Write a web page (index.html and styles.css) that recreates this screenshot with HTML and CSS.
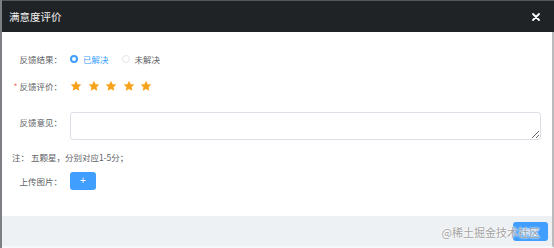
FILE: index.html
```html
<!DOCTYPE html>
<html lang="zh-CN">
<head>
  <meta charset="UTF-8">
  <meta name="viewport" content="width=device-width, initial-scale=1.0">
  <title>满意度评价</title>
  <link rel="stylesheet" href="styles.css">
</head>
<body>

<div class="dialog">
  <!-- Header -->
  <div class="dialog-header">
    <span class="dialog-title">满意度评价</span>
    <svg class="close-icon" width="8" height="8" viewBox="0 0 8 8">
      <path d="M1 1 L7 7 M7 1 L1 7" stroke="#fff" stroke-width="1.8" stroke-linecap="round"/>
    </svg>
  </div>

  <!-- Body -->
  <div class="dialog-body">
    <div class="form-row row-result">
      <label class="form-label">反馈结果：</label>
      <div class="radio-group">
        <span class="radio checked"><span class="radio-dot"></span>已解决</span>
        <span class="radio"><span class="radio-dot"></span>未解决</span>
      </div>
    </div>

    <div class="form-row row-rate">
      <label class="form-label"><span class="required">*</span> 反馈评价：</label>
      <div class="stars">
        <svg class="star" viewBox="0 0 24 24"><path d="M12 1.5l3.2 6.9 7.5.8-5.6 5.1 1.6 7.4L12 17.9l-6.7 3.8 1.6-7.4L1.3 9.2l7.5-.8z"/></svg>
        <svg class="star" viewBox="0 0 24 24"><path d="M12 1.5l3.2 6.9 7.5.8-5.6 5.1 1.6 7.4L12 17.9l-6.7 3.8 1.6-7.4L1.3 9.2l7.5-.8z"/></svg>
        <svg class="star" viewBox="0 0 24 24"><path d="M12 1.5l3.2 6.9 7.5.8-5.6 5.1 1.6 7.4L12 17.9l-6.7 3.8 1.6-7.4L1.3 9.2l7.5-.8z"/></svg>
        <svg class="star" viewBox="0 0 24 24"><path d="M12 1.5l3.2 6.9 7.5.8-5.6 5.1 1.6 7.4L12 17.9l-6.7 3.8 1.6-7.4L1.3 9.2l7.5-.8z"/></svg>
        <svg class="star" viewBox="0 0 24 24"><path d="M12 1.5l3.2 6.9 7.5.8-5.6 5.1 1.6 7.4L12 17.9l-6.7 3.8 1.6-7.4L1.3 9.2l7.5-.8z"/></svg>
      </div>
    </div>

    <div class="form-row row-opinion">
      <label class="form-label">反馈意见：</label>
      <textarea class="opinion"></textarea>
    </div>

    <p class="note">注： 五颗星，分别对应1-5分；</p>

    <div class="form-row row-upload">
      <label class="form-label">上传图片：</label>
      <button class="upload-btn">+</button>
    </div>
  </div>

  <!-- Footer -->
  <div class="dialog-footer">
    <button class="ok-btn">确定</button>
    <span class="watermark">@稀土掘金技术社区</span>
  </div>
</div>

</body>
</html>
```

FILE: styles.css
```css
/* Dialog frame */
html, body {
  margin: 0;
  padding: 0;
  background: #fff;
}
body {
  font-family: "Noto Sans CJK SC", "Liberation Sans", sans-serif;
  color: #606266;
}
.dialog {
  width: 554px;
  height: 248px;
  border-left: 2px solid #7d7f82;
  box-sizing: border-box;
  display: flex;
  flex-direction: column;
}
.dialog-header {
  height: 32px;
  background-color: #202326;
  border-top: 1px solid #55585b;
  box-sizing: border-box;
  display: flex;
  align-items: center;
  justify-content: space-between;
  padding: 0 14px 0 7px;
}
.dialog-title {
  color: #f2f2f2;
  font-size: 10.5px;
}
.dialog-body {
  flex: 1;
  border-right: 2px solid #b9bbbd;
  padding-top: 17px;
}
.dialog-footer {
  position: relative;
  height: 30px;
  background-color: #eef1f4;
  border-right: 2px solid #b9bbbd;
  border-bottom: 2px solid #f7f8fa;
  display: flex;
  align-items: center;
  justify-content: flex-end;
  padding-right: 4px;
}

/* Form rows */
.form-row {
  display: flex;
  align-items: center;
  font-size: 8.5px;
}
.form-label {
  width: 60px;
  text-align: right;
  padding-right: 8px;
  flex-shrink: 0;
}
.required {
  color: #f56c6c;
}
.row-result {
  height: 20px;
}
.row-rate {
  height: 20px;
  margin-top: 7px;
}
.row-opinion {
  align-items: flex-start;
  margin-top: 16px;
}
.row-opinion .form-label {
  padding-top: 4px;
}
.row-upload {
  height: 20px;
  margin-top: 7px;
}

/* Radio */
.radio-group {
  display: flex;
  gap: 13px;
}
.radio {
  display: flex;
  align-items: center;
  gap: 5px;
  color: #606266;
}
.radio.checked {
  color: #409eff;
}
.radio-dot {
  width: 8px;
  height: 8px;
  border-radius: 50%;
  border: 1px solid #e4e6ea;
  box-sizing: border-box;
  background: #fff;
}
.radio.checked .radio-dot {
  border: 2.5px solid #409eff;
}

/* Stars */
.stars {
  display: flex;
  gap: 5.5px;
}
.star {
  width: 12px;
  height: 12px;
  fill: #f7a21b;
}

/* Textarea */
.opinion {
  width: 471px;
  height: 28px;
  box-sizing: border-box;
  border: 1px solid #dcdfe6;
  border-radius: 3px;
  resize: vertical;
  padding: 0;
  margin: 0;
}

.note {
  margin: 10px 0 0 10px;
  font-size: 8.5px;
  line-height: 14px;
}

/* Buttons */
.upload-btn {
  width: 26px;
  height: 18px;
  border: none;
  border-radius: 3px;
  background-color: #409eff;
  color: #fff;
  font-size: 10px;
  line-height: 18px;
  padding: 0;
}
.ok-btn {
  width: 35px;
  height: 19px;
  border: none;
  border-radius: 3px;
  background-color: #409eff;
  color: #fff;
  font-family: "Noto Sans CJK SC", sans-serif;
  font-size: 8.5px;
  padding: 0;
}
.watermark {
  position: absolute;
  right: 12px;
  top: 8px;
  font-size: 11px;
  color: #a3a3a3;
  text-shadow: 0 0 2px #fff, 0 0 2px #fff;
}
```
